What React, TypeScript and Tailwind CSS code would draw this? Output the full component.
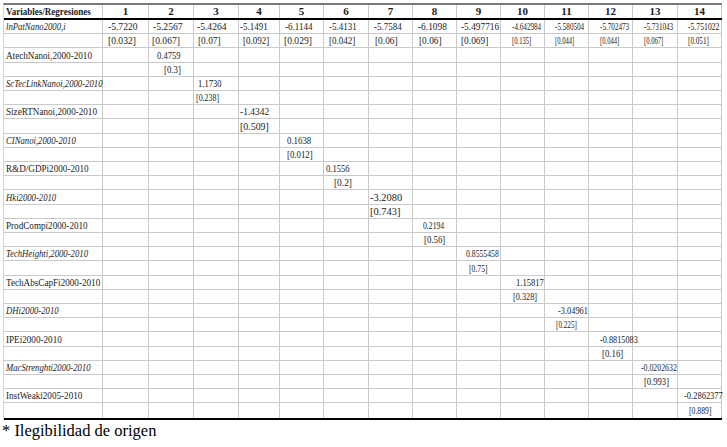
const serif = { fontFamily: '"Liberation Serif", "Times New Roman", serif' };

type Val = { t: string; pl: string; sx: string };

// column lines and widths measured off the scan
const grid =
  "grid grid-cols-[99px_46px_45px_45px_41px_44px_45px_44px_44px_44px_44px_44px_44px_45px_44px]";

const topCoef: Val[] = [
  { t: "-5.7220", pl: "pl-[5px]", sx: "scale-x-[0.87]" },
  { t: "-5.2567", pl: "pl-[4px]", sx: "scale-x-[0.87]" },
  { t: "-5.4264", pl: "pl-[3px]", sx: "scale-x-[0.87]" },
  { t: "-5.1491", pl: "pl-[1px]", sx: "scale-x-[0.82]" },
  { t: "-6.1144", pl: "pl-[5px]", sx: "scale-x-[0.82]" },
  { t: "-5.4131", pl: "pl-[5px]", sx: "scale-x-[0.82]" },
  { t: "-5.7584", pl: "pl-[5px]", sx: "scale-x-[0.82]" },
  { t: "-6.1098", pl: "pl-[5px]", sx: "scale-x-[0.85]" },
  { t: "-5.497716", pl: "pl-[4px]", sx: "scale-x-[0.85]" },
  { t: "-4.642984", pl: "pl-[11px]", sx: "scale-x-[0.65]" },
  { t: "-5.580504", pl: "pl-[10px]", sx: "scale-x-[0.65]" },
  { t: "-5.702473", pl: "pl-[11px]", sx: "scale-x-[0.65]" },
  { t: "-5.731043", pl: "pl-[11px]", sx: "scale-x-[0.65]" },
  { t: "-5.751022", pl: "pl-[10px]", sx: "scale-x-[0.7]" },
];

const topP: Val[] = [
  { t: "[0.032]", pl: "pl-[5px]", sx: "scale-x-[0.87]" },
  { t: "[0.067]", pl: "pl-[3px]", sx: "scale-x-[0.87]" },
  { t: "[0.07]", pl: "pl-[4px]", sx: "scale-x-[0.85]" },
  { t: "[0.092]", pl: "pl-[4px]", sx: "scale-x-[0.82]" },
  { t: "[0.029]", pl: "pl-[4px]", sx: "scale-x-[0.87]" },
  { t: "[0.042]", pl: "pl-[5px]", sx: "scale-x-[0.82]" },
  { t: "[0.06]", pl: "pl-[6px]", sx: "scale-x-[0.85]" },
  { t: "[0.06]", pl: "pl-[6px]", sx: "scale-x-[0.85]" },
  { t: "[0.069]", pl: "pl-[4px]", sx: "scale-x-[0.85]" },
  { t: "[0.135]", pl: "pl-[11px]", sx: "scale-x-[0.6]" },
  { t: "[0.044]", pl: "pl-[10px]", sx: "scale-x-[0.6]" },
  { t: "[0.044]", pl: "pl-[11px]", sx: "scale-x-[0.6]" },
  { t: "[0.067]", pl: "pl-[11px]", sx: "scale-x-[0.6]" },
  { t: "[0.051]", pl: "pl-[10px]", sx: "scale-x-[0.65]" },
];

type Diag = { label: string; it: boolean; col: number; coef: Val; p: Val };

const diag: Diag[] = [
  { label: "AtechNanoi,2000-2010", it: false, col: 2, coef: { t: "0.4759", pl: "pl-[8px]", sx: "scale-x-[0.78]" }, p: { t: "[0.3]", pl: "pl-[15px]", sx: "scale-x-[0.8]" } },
  { label: "ScTecLinkNanoi,2000-2010", it: true, col: 3, coef: { t: "1.1730", pl: "pl-[4px]", sx: "scale-x-[0.78]" }, p: { t: "[0.238]", pl: "pl-[2px]", sx: "scale-x-[0.72]" } },
  { label: "SizeRTNanoi,2000-2010", it: false, col: 4, coef: { t: "-1.4342", pl: "pl-[1px]", sx: "scale-x-[0.86]" }, p: { t: "[0.509]", pl: "pl-[1px]", sx: "scale-x-[0.9]" } },
  { label: "CINanoi,2000-2010", it: true, col: 5, coef: { t: "0.1638", pl: "pl-[7px]", sx: "scale-x-[0.8]" }, p: { t: "[0.012]", pl: "pl-[7px]", sx: "scale-x-[0.8]" } },
  { label: "R&D/GDPi2000-2010", it: false, col: 6, coef: { t: "0.1556", pl: "pl-[2px]", sx: "scale-x-[0.78]" }, p: { t: "[0.2]", pl: "pl-[10px]", sx: "scale-x-[0.85]" } },
  { label: "Hki2000-2010", it: true, col: 7, coef: { t: "-3.2080", pl: "pl-[1px]", sx: "scale-x-[0.95]" }, p: { t: "[0.743]", pl: "pl-[1px]", sx: "scale-x-[0.95]" } },
  { label: "ProdCompi2000-2010", it: false, col: 8, coef: { t: "0.2194", pl: "pl-[10px]", sx: "scale-x-[0.7]" }, p: { t: "[0.56]", pl: "pl-[11px]", sx: "scale-x-[0.8]" } },
  { label: "TechHeighti,2000-2010", it: true, col: 9, coef: { t: "0.8555458", pl: "pl-[9px]", sx: "scale-x-[0.7]" }, p: { t: "[0.75]", pl: "pl-[12px]", sx: "scale-x-[0.7]" } },
  { label: "TechAbsCapFi2000-2010", it: false, col: 10, coef: { t: "1.15817", pl: "pl-[15px]", sx: "scale-x-[0.78]" }, p: { t: "[0.328]", pl: "pl-[12px]", sx: "scale-x-[0.75]" } },
  { label: "DHi2000-2010", it: true, col: 11, coef: { t: "-3.04961", pl: "pl-[13px]", sx: "scale-x-[0.76]" }, p: { t: "[0.225]", pl: "pl-[11px]", sx: "scale-x-[0.65]" } },
  { label: "IPEi2000-2010", it: false, col: 12, coef: { t: "-0.8815083", pl: "pl-[11px]", sx: "scale-x-[0.75]" }, p: { t: "[0.16]", pl: "pl-[13px]", sx: "scale-x-[0.8]" } },
  { label: "MacStrenghti2000-2010", it: true, col: 13, coef: { t: "-0.0202632", pl: "pl-[8px]", sx: "scale-x-[0.71]" }, p: { t: "[0.993]", pl: "pl-[11px]", sx: "scale-x-[0.78]" } },
  { label: "InstWeaki2005-2010", it: false, col: 14, coef: { t: "-0.2862377", pl: "pl-[6px]", sx: "scale-x-[0.77]" }, p: { t: "[0.889]", pl: "pl-[11px]", sx: "scale-x-[0.7]" } },
];

const cols = Array.from({ length: 14 }, (_, i) => i + 1);

function Cell({ v, last }: { v?: Val; last: boolean }) {
  return (
    <div
      className={`flex items-center overflow-visible whitespace-nowrap border-b border-r border-[#c9c9c9] ${
        last ? "border-b-0" : ""
      } ${v ? v.pl : ""}`}
    >
      {v && <span className={`inline-block origin-left ${v.sx}`}>{v.t}</span>}
    </div>
  );
}

function Label({ text, it, last }: { text: string; it: boolean; last: boolean }) {
  return (
    <div
      className={`flex items-center whitespace-nowrap border-b border-r border-[#c9c9c9] pl-[2px] ${
        last ? "border-b-0" : ""
      }`}
    >
      <span className={`inline-block origin-left ${it ? "scale-x-[0.79] italic" : "scale-x-[0.83]"}`}>
        {text}
      </span>
    </div>
  );
}

function PairRows({
  label,
  it,
  coef,
  p,
  last,
}: {
  label: string;
  it: boolean;
  coef: (Val | undefined)[];
  p: (Val | undefined)[];
  last: boolean;
}) {
  return (
    <>
      <Label text={label} it={it} last={false} />
      {cols.map((c) => (
        <Cell key={"c" + c} v={coef[c - 1]} last={false} />
      ))}
      <Label text="" it={false} last={last} />
      {cols.map((c) => (
        <Cell key={"p" + c} v={p[c - 1]} last={last} />
      ))}
    </>
  );
}

export default function App() {
  return (
    <div className="h-[447px] w-[727px] overflow-hidden bg-white text-[#1c1c1c]" style={serif}>
      <div className="ml-[3px] mt-[3px] w-[719px] border-l border-t-2 border-l-[#d4d4d4] border-t-[#7a7a7a]">
        <div className={`${grid} h-[15px] border-b-2 border-black text-[11px] font-bold leading-none`}>
          <div className="flex items-center whitespace-nowrap border-r border-[#c9c9c9] pl-[2px]">
            <span className="inline-block origin-left scale-x-[0.82]">Variables/Regresiones</span>
          </div>
          {cols.map((c) => (
            <div key={c} className="flex items-center justify-center border-r border-[#c9c9c9]">
              {c}
            </div>
          ))}
        </div>
        <div className={`${grid} auto-rows-[14.21px] border-b-2 border-black text-[11px] leading-none`}>
          <PairRows label="lnPatNano2000,i" it coef={topCoef} p={topP} last={false} />
          {diag.map((d, i) => {
            const coef: (Val | undefined)[] = cols.map((c) => (c === d.col ? d.coef : undefined));
            const p: (Val | undefined)[] = cols.map((c) => (c === d.col ? d.p : undefined));
            return (
              <PairRows
                key={d.label}
                label={d.label}
                it={d.it}
                coef={coef}
                p={p}
                last={i === diag.length - 1}
              />
            );
          })}
        </div>
      </div>
      <p className="ml-[2px] mt-[2px] text-[16.5px] leading-[18px] text-black">* Ilegibilidad de origen</p>
    </div>
  );
}
